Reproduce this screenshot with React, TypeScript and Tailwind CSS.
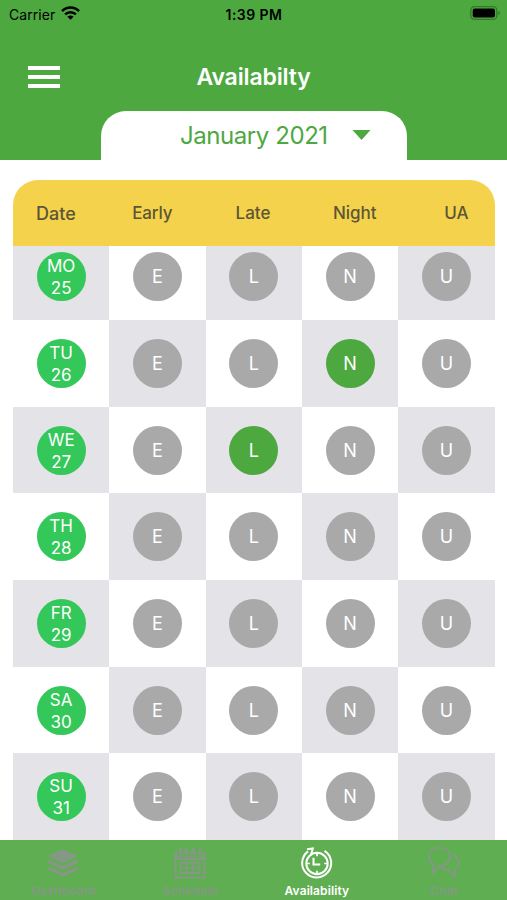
import React from "react";

const days = [
  ["MO", "25"],
  ["TU", "26"],
  ["WE", "27"],
  ["TH", "28"],
  ["FR", "29"],
  ["SA", "30"],
  ["SU", "31"],
];
const shifts = ["E", "L", "N", "U"];
const selected: Record<string, string> = { "26": "N", "27": "L" };

function StatusBar() {
  return (
    <div className="flex h-7 items-center justify-between pl-[9px] pr-[6px] text-black">
      <div className="flex w-[200px] items-center gap-[6px] text-[14px]">
        <span className="w-[46px] tracking-[0.05px]">Carrier</span>
        <svg className="-mt-[2px]" width="19" height="14" viewBox="0 0 19 14" fill="none" stroke="black" strokeWidth="2.5">
          <path d="M1 5.2C5.8.4 13.2.4 18 5.2" />
          <path d="M4.1 8.4c3-3 7.8-3 10.8 0" />
          <path d="M9.500 13.800 6.400 10.700c1.700-1.700 4.500-1.700 6.200 0Z" fill="black" stroke="none" />
        </svg>
      </div>
      <span className="-ml-[2px] text-[14px] font-semibold tracking-[0.45px]">1:39 PM</span>
      <div className="flex w-[200px] justify-end">
        <svg className="-mt-[2px]" width="31" height="14" viewBox="0 0 31 14">
          <rect x=".8" y=".7" width="26" height="12.6" rx="3.6" fill="none" stroke="#327a27" strokeWidth="1.3" />
          <rect x="2.7" y="2.6" width="22.3" height="8.8" rx="2" fill="black" />
          <path d="M28.4 4.8c2 .8 2 3.6 0 4.4Z" fill="#327a27" />
        </svg>
      </div>
    </div>
  );
}

function LayersIcon() {
  return (
    <svg width="32" height="30" viewBox="0 0 32 30" fill="currentColor">
      <path d="M16 1 31 8 16 15.500 1 8Z" />
      <path d="m1 12.500 2-.8 13 6.300 13-6.300 2 .8v2.500L16 22.300 1 15Z" />
      <path d="m1 19.500 2-.8 13 6.300 13-6.300 2 .8v2.300L16 29 1 21.800Z" />
    </svg>
  );
}

function CalendarIcon() {
  return (
    <svg width="32" height="32" viewBox="0 0 32 32" fill="none" stroke="currentColor" strokeWidth="2">
      <path d="M1.500 5v25.500h29V5M1.500 12h29" />
      <path d="M3 4v6h4V4m3 0v6h4V4m3 0v6h4V4m4 0v6h4V4" strokeWidth="1.500" />
      <path d="M6 1v6M12.500 1v6M19.500 1v6M26 1v6" strokeWidth="2.800" />
      <path d="M6.500 15.500h19v10.500h-19ZM6.500 20.700h19M13 15.500V26M19 15.500V26" strokeWidth="1.900" />
    </svg>
  );
}

function ClockIcon() {
  return (
    <svg width="32" height="32" viewBox="0 0 32 32" fill="none" stroke="currentColor" strokeWidth="2">
      <path d="M7 4.400A14.500 14.500 0 1 0 23.500 3.800" />
      <path d="M6 2.200 11.800 1.500 10.200 7.200" />
      <circle cx="16" cy="16.500" r="10.700" />
      <path d="M16 6v3.300M16 23.700v3.300M5.500 16.500h3.300M23.200 16.500h3.300" strokeWidth="1.700" />
      <path d="M12.500 10.800v6.800h6.700" strokeWidth="2" />
    </svg>
  );
}

function ChatIcon() {
  return (
    <svg width="32" height="32" viewBox="0 0 32 32" fill="none" stroke="currentColor" strokeWidth="2" strokeLinejoin="round">
      <path d="M5.200 17.200A10.500 9.200 0 1 1 11 19L4.500 26.500Z" />
      <path d="M24 7.500a8.600 8.600 0 0 1 3 15.300L27.500 30l-7-6.800c-3.500.2-6-1.500-7.500-4" />
    </svg>
  );
}

function Tab({ icon, label, active = false }: { icon: React.ReactNode; label: string; active?: boolean }) {
  return (
    <div className={`flex flex-col items-center pt-[7px] ${active ? "text-white" : "text-[#849884]"}`}>
      <div className="flex h-8 items-center">{icon}</div>
      <span className="mt-1 text-[12px] font-semibold leading-4 tracking-[0.1px]">{label}</span>
    </div>
  );
}

export default function App() {
  return (
    <div className="flex h-[900px] w-[507px] flex-col overflow-hidden bg-white font-['Inter','Liberation_Sans',sans-serif]">
      <header className="flex h-40 shrink-0 flex-col bg-[#4da83f]">
        <StatusBar />
        <div className="grid h-[83px] grid-cols-[1fr_auto_1fr] items-center pt-[15px]">
          <div className="ml-[28px] flex w-8 flex-col gap-[5px]">
            <i className="h-1 bg-white" />
            <i className="h-1 bg-white" />
            <i className="h-1 bg-white" />
          </div>
          <h1 className="text-[23px] font-semibold leading-7 tracking-[-0.15px] text-white">Availabilty</h1>
        </div>
        <div className="ml-[101px] flex h-[49px] w-[306px] rounded-t-[25px] bg-white pl-[79px] pt-[9px] text-[#4da83f]">
          <span className="w-[149px] whitespace-nowrap text-[24px] leading-8 tracking-[-0.43px]">January 2021</span>
          <svg className="ml-[23px] mt-[10px]" width="19" height="10" viewBox="0 0 19 10" fill="currentColor">
            <path d="M.5 0h18L9.500 10Z" />
          </svg>
        </div>
      </header>

      <main className="ml-[13px] mr-[12.500px] mt-[19.500px] flex min-h-0 flex-1 flex-col">
        <div className="grid h-[66.500px] shrink-0 grid-cols-5 items-center rounded-t-[25px] bg-[#f5d24c] pt-[1.500px] text-[17px] font-medium text-[#5c5636]">
          <span className="pl-[23px] text-[18px]">Date</span>
          <span className="pl-[23px] tracking-[-0.2px]">Early</span>
          <span className="pl-[30px]">Late</span>
          <span className="pl-[31px]">Night</span>
          <span className="pl-[46px]">UA</span>
        </div>
        <div className="min-h-0 flex-1 overflow-hidden">
          <div className="-mt-[12.700px]">
            {days.map(([day, date], row) => (
              <div key={date} className="grid h-[86.700px] grid-cols-5">
                <div className={`flex items-center justify-center ${row % 2 === 0 ? "bg-[#e4e3e8]" : "bg-white"}`}>
                  <div className="flex size-[49px] flex-col items-center justify-center rounded-full bg-[#34c759] pt-px text-[17px] leading-[22px] text-white">
                    <span>{day}</span>
                    <span>{date}</span>
                  </div>
                </div>
                {shifts.map((shift, col) => (
                  <div
                    key={shift}
                    className={`flex items-center justify-center ${(row + col) % 2 === 1 ? "bg-[#e4e3e8]" : "bg-white"}`}
                  >
                    <div
                      className={`flex size-[49px] items-center justify-center rounded-full text-[18px] text-white ${
                        selected[date] === shift ? "bg-[#4da83f]" : "bg-[#a9a9a9]"
                      }`}
                    >
                      {shift}
                    </div>
                  </div>
                ))}
              </div>
            ))}
          </div>
        </div>
      </main>

      <nav className="grid h-[60px] shrink-0 grid-cols-4 bg-[#5fae52]">
        <Tab icon={<LayersIcon />} label="Dashboard" />
        <Tab icon={<CalendarIcon />} label="Schedule" />
        <Tab icon={<ClockIcon />} label="Availability" active />
        <Tab icon={<ChatIcon />} label="Chat" />
      </nav>
    </div>
  );
}
